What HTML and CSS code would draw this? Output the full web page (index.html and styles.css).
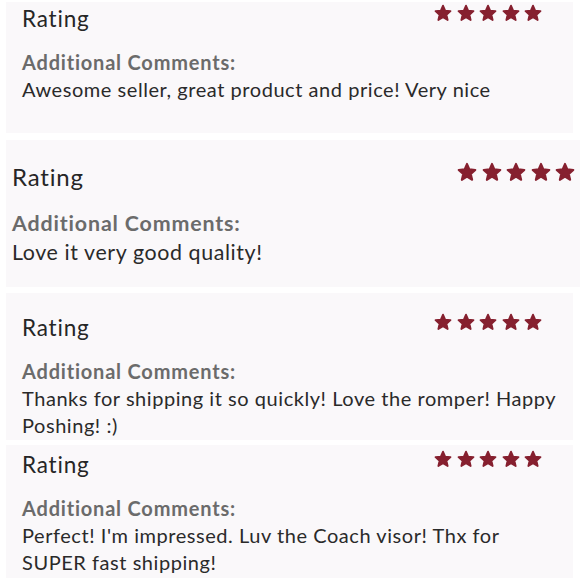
FILE: index.html
```html
<!DOCTYPE html>
<html>
<head>
<meta charset="utf-8">
<link rel="stylesheet" href="styles.css">
</head>
<body>
<svg width="0" height="0" class="defs">
  <defs>
    <symbol id="star" viewBox="0 0 24 24">
      <path d="M12 2.2l2.9 6.6 7.1.7-5.4 4.8 1.6 7.1L12 17.7l-6.2 3.7 1.6-7.1L2 9.5l7.1-.7z" stroke-linejoin="round"/>
    </symbol>
  </defs>
</svg>
<div class="list">
  <section class="card card-first">
    <div class="head">
      <h2 class="title">Rating</h2>
      <div class="stars">
        <svg class="star"><use href="#star"/></svg><svg class="star"><use href="#star"/></svg><svg class="star"><use href="#star"/></svg><svg class="star"><use href="#star"/></svg><svg class="star"><use href="#star"/></svg>
      </div>
    </div>
    <div class="label">Additional Comments:</div>
    <p class="comment">Awesome seller, great product and price! Very nice</p>
  </section>
  <section class="card card-big">
    <div class="head">
      <h2 class="title">Rating</h2>
      <div class="stars">
        <svg class="star"><use href="#star"/></svg><svg class="star"><use href="#star"/></svg><svg class="star"><use href="#star"/></svg><svg class="star"><use href="#star"/></svg><svg class="star"><use href="#star"/></svg>
      </div>
    </div>
    <div class="label">Additional Comments:</div>
    <p class="comment">Love it very good quality!</p>
  </section>
  <section class="card card-third">
    <div class="head">
      <h2 class="title">Rating</h2>
      <div class="stars">
        <svg class="star"><use href="#star"/></svg><svg class="star"><use href="#star"/></svg><svg class="star"><use href="#star"/></svg><svg class="star"><use href="#star"/></svg><svg class="star"><use href="#star"/></svg>
      </div>
    </div>
    <div class="label">Additional Comments:</div>
    <p class="comment">Thanks for shipping it so quickly! Love the romper! Happy Poshing! :)</p>
  </section>
  <section class="card card-last">
    <div class="head">
      <h2 class="title">Rating</h2>
      <div class="stars">
        <svg class="star"><use href="#star"/></svg><svg class="star"><use href="#star"/></svg><svg class="star"><use href="#star"/></svg><svg class="star"><use href="#star"/></svg><svg class="star"><use href="#star"/></svg>
      </div>
    </div>
    <div class="label">Additional Comments:</div>
    <p class="comment">Perfect! I'm impressed. Luv the Coach visor! Thx for SUPER fast shipping!</p>
  </section>
</div>
</body>
</html>
```
FILE: styles.css
```css
html, body {
  margin: 0;
  padding: 0;
  background: #ffffff;
  width: 580px;
  height: 580px;
  overflow: hidden;
}
body {
  font-family: Lato, "Open Sans", sans-serif;
  color: #2a2a2a;
}
.defs {
  position: absolute;
  width: 0;
  height: 0;
}
.list {
  display: flex;
  flex-direction: column;
  padding-top: 2px;
}
.card {
  background: #faf8fa;
  margin: 0 7px 0 6px;
  padding: 21px 8px 1px 16px;
  height: 147px;
  box-sizing: border-box;
}
.card-first {
  padding-top: 3px;
  height: 131px;
}
.card-big {
  margin-top: 7px;
  margin-right: 0;
  padding: 22px 5px 20px 6px;
}
.card-third {
  margin-top: 6px;
}
.card-last {
  margin-top: 5px;
  padding-top: 6px;
  height: 133px;
}
.head {
  display: flex;
  justify-content: space-between;
  align-items: flex-start;
}
.title {
  margin: 0;
  font-size: 22.5px;
  line-height: 28px;
  font-weight: 400;
  letter-spacing: 0.8px;
  color: #262626;
}
.stars {
  display: flex;
  gap: 4.5px;
  margin-top: -1px;
  margin-right: 23px;
}
.star {
  width: 18px;
  height: 18px;
  fill: #86202f;
  stroke: #86202f;
  stroke-width: 2.4;
}
.label {
  margin-top: 15px;
  font-size: 20px;
  line-height: 28px;
  font-weight: 700;
  letter-spacing: 0.8px;
  color: #6b6b6b;
}
.comment {
  margin: 0;
  font-size: 20px;
  line-height: 27px;
  letter-spacing: 0.55px;
  color: #2a2a2a;
}
.card-big .title {
  font-size: 24px;
  line-height: 30px;
}
.card-big .stars {
  gap: 4.5px;
  margin-top: 0;
  margin-right: 0;
}
.card-big .star {
  width: 20px;
  height: 20px;
}
.card-big .label {
  margin-top: 16px;
  font-size: 21.4px;
  line-height: 30px;
  letter-spacing: 0.85px;
}
.card-big .comment {
  font-size: 21.4px;
  line-height: 29px;
  letter-spacing: 0.6px;
}
```
